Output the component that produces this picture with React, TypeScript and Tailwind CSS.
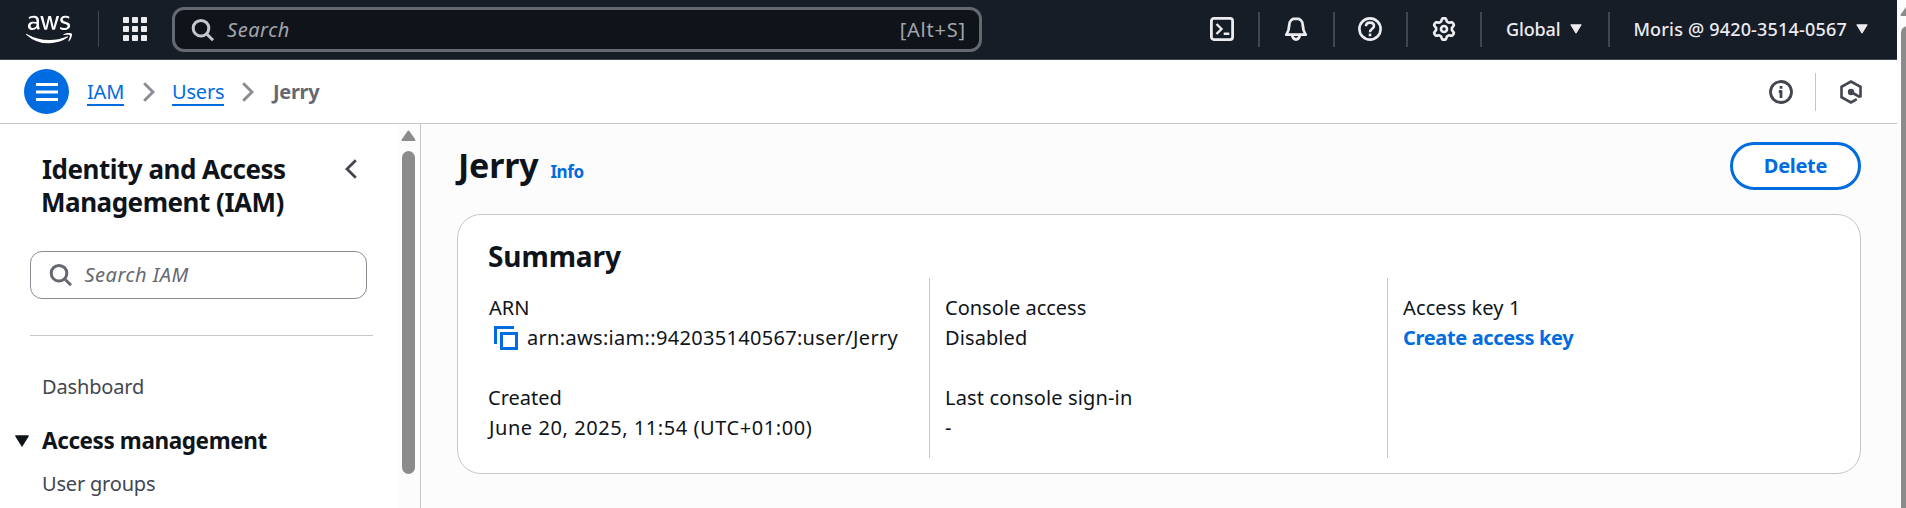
import React from "react";
import { FaAws } from "react-icons/fa";

// Outline of a six-toothed cog centred in a 24x24 box.
const gearPath =
  Array.from({ length: 72 }, (_, i) => {
    const a = (i / 72) * Math.PI * 2;
    const wave = Math.max(-1, Math.min(1, 1.6 * Math.cos(6 * (a + Math.PI / 2))));
    const r = 9.3 + 1.4 * wave;
    return `${i === 0 ? "M" : "L"}${(12 + r * Math.cos(a)).toFixed(2)} ${(12 + r * Math.sin(a)).toFixed(2)}`;
  }).join("") + "z";

function SearchIcon({ className }: { className: string }) {
  return (
    <svg viewBox="0 0 24 24" className={className} fill="none" stroke="currentColor" strokeWidth="3">
      <circle cx="10" cy="10.2" r="7.800" />
      <path d="M15.500 15.700l6.500 6.500" />
    </svg>
  );
}

function Caret({ className }: { className: string }) {
  return (
    <svg viewBox="0 0 12 10" className={className} fill="currentColor" stroke="currentColor" strokeWidth="1" strokeLinejoin="round">
      <path d="M0.8 0.8h10.4L6 9.2z" />
    </svg>
  );
}

function Crumb() {
  return (
    <svg viewBox="0 0 12 20" className="h-5 w-3 text-[#8c8c94]" fill="none" stroke="currentColor" strokeWidth="3">
      <path d="M1.2 1.2L10 10l-8.800 8.800" />
    </svg>
  );
}

function Divider() {
  return <span className="h-[35px] w-[2px] shrink-0 bg-[#424650]" />;
}

function TopBar() {
  return (
    <header className="flex h-[60px] items-start border-b border-[#424650] bg-[#161d26] text-[#ebebf0]">
      <div className="flex h-[58px] w-full items-center">
        <FaAws className="ml-[26px] h-[37px] w-[46px] shrink-0 text-white" />
        <span className="ml-[26px] h-9 w-px shrink-0 bg-[#424650]" />
        <svg viewBox="0 0 24 24" className="ml-6 size-6 shrink-0" fill="currentColor">
          {[0, 9, 18].map((y) =>
            [0, 9, 18].map((x) => <rect key={`${x}-${y}`} x={x} y={y} width="6" height="6" rx="0.8" />)
          )}
        </svg>
        <div className="ml-[25px] mt-px flex h-[45px] w-[810px] shrink-0 items-center rounded-[12px] border-[3px] border-[#656871] bg-[#0f141a] pl-4 pr-[13px]">
          <SearchIcon className="size-6 text-[#c6c6cd]" />
          <span className="ml-[12px] text-[20px] italic leading-[30px] tracking-[0.55px] text-[#a4a4ad]">Search</span>
          <span className="ml-auto text-[20px] leading-[30px] tracking-[0.800px] text-[#a4a4ad]">[Alt+S]</span>
        </div>

        <svg viewBox="0 0 24 24" className="ml-[228px] size-6 shrink-0" fill="none" stroke="currentColor" strokeWidth="2.800">
          <rect x="1.400" y="1.400" width="21.200" height="21.200" rx="2.500" />
          <path d="M6.500 7l5 5-5 5M13.700 16.700h5.600" strokeWidth="2.400" />
        </svg>
        <span className="ml-6 flex"><Divider /></span>
        <svg viewBox="0 0 24 24" className="ml-6 size-6 shrink-0" fill="none" stroke="currentColor" strokeWidth="2.800" strokeLinejoin="round">
          <path d="M12 1.500c-4.200 0-6.800 2.800-6.800 6.800 0 5-1.400 7-2.900 9.400h19.400c-1.500-2.400-2.900-4.400-2.900-9.400 0-4-2.600-6.800-6.800-6.800z" />
          <path d="M8.300 18.500c.5 2.600 1.700 4 3.700 4s3.200-1.400 3.700-4" />
        </svg>
        <span className="ml-[25px] flex"><Divider /></span>
        <svg viewBox="0 0 24 24" className="ml-[23px] size-6 shrink-0" fill="none" stroke="currentColor" strokeWidth="2.600">
          <circle cx="12" cy="12" r="10.600" />
          <path d="M8 9.300C8 6.900 9.700 5.600 12 5.600s4 1.300 4 3.500c0 2.800-4 2.700-4 6.200" />
          <path d="M12 16.600v2.700" />
        </svg>
        <span className="ml-6 flex"><Divider /></span>
        <svg viewBox="0 0 24 24" className="ml-6 size-6 shrink-0" fill="none" stroke="currentColor" strokeWidth="2.700" strokeLinejoin="round">
          <path d={gearPath} />
          <circle cx="12" cy="12" r="3" />
        </svg>
        <span className="ml-6 flex"><Divider /></span>
        <span className="ml-[24px] text-[18px] font-medium leading-[27px] tracking-[-0.15px]">Global</span>
        <Caret className="ml-[10px] h-[10px] w-3 shrink-0" />
        <span className="ml-[26px] flex"><Divider /></span>
        <span className="ml-[23px] whitespace-nowrap text-[18px] font-medium leading-[27px] tracking-[0.19px]">
          Moris @ 9420-3514-0567
        </span>
        <Caret className="ml-[9px] h-[10px] w-3 shrink-0" />
      </div>
    </header>
  );
}

function Breadcrumbs() {
  return (
    <div className="flex h-16 items-center border-b border-[#c6c6cd] bg-white text-[20px] leading-[30px]">
      <button className="ml-6 flex size-[45px] items-center justify-center rounded-full bg-[#006ce0] text-white">
        <svg viewBox="0 0 22 18" className="h-[18px] w-[22px]" fill="currentColor">
          <path d="M0 0h22v3H0zM0 7.500h22v3H0zM0 15h22v3H0z" />
        </svg>
      </button>
      <a className="ml-[18px] flex h-[29px] w-[37px] border-b-2 border-[#006ce0] leading-[30px] tracking-[-0.2px] text-[#006ce0]">IAM</a>
      <span className="ml-[18.500px]"><Crumb /></span>
      <a className="ml-[17.500px] flex h-[29px] w-[52px] border-b-2 border-[#006ce0] leading-[30px] tracking-[-0.18px] text-[#006ce0]">Users</a>
      <span className="ml-[18px]"><Crumb /></span>
      <span className="ml-[19px] pt-px font-bold tracking-[-0.3px] text-[#656871]">Jerry</span>
      <svg viewBox="0 0 24 24" className="ml-auto size-6 text-[#424650]" fill="none" stroke="currentColor" strokeWidth="2.800">
        <circle cx="12" cy="12" r="10.500" />
        <path d="M12 6v2.800M9.800 11.500H12M12 10.300V18" />
      </svg>
      <span className="ml-[22px] h-[38px] w-px bg-[#c6c6cd]" />
      <svg viewBox="0 0 24 24" className="ml-[23px] mr-[34px] size-6 text-[#424650]" fill="none" stroke="currentColor" strokeWidth="2.600">
        <path d="M21.500 17.600V6.800L12 1.600 2.500 6.800v10.400L12 22.400l5.800-3.200" />
        <circle cx="12" cy="12" r="3.200" fill="currentColor" stroke="none" />
        <path d="M12 12l9 5.200" />
      </svg>
    </div>
  );
}

function Sidebar() {
  return (
    <aside className="flex w-[421px] shrink-0 border-r border-[#c6c6cd] bg-white">
      <div className="w-[397px] pl-[30px] text-[#424650]">
        <div className="flex items-start pl-3 pt-[29px]">
          <h2 className="w-[270px] text-[26px] font-bold leading-[33px] text-[#0f141a]">
            <span className="block whitespace-nowrap tracking-[-0.5px]">Identity and Access</span>
            <span className="-ml-px block whitespace-nowrap tracking-[-0.48px]">Management (IAM)</span>
          </h2>
          <svg viewBox="0 0 12 20" className="ml-[33px] mt-[6px] h-5 w-3" fill="none" stroke="currentColor" strokeWidth="2.800">
            <path d="M10.800 1.200L2 10l8.800 8.800" />
          </svg>
        </div>
        <div className="mt-8 flex h-12 w-[337px] items-center rounded-[12px] border border-[#8c8c94] pl-[18px] text-[#656871]">
          <SearchIcon className="size-6" />
          <span className="ml-[11.500px] text-[20px] italic leading-[30px] tracking-[0.49px]">Search IAM</span>
        </div>
        <div className="mt-9 h-px w-[343px] bg-[#c6c6cd]" />
        <div className="mt-9 pl-3 text-[20px] leading-[30px] tracking-[-0.15px]">Dashboard</div>
        <div className="-ml-4 mt-[24px] flex items-center text-[#0f141a]">
          <Caret className="h-3 w-4" />
          <span className="ml-[12px] text-[22.500px] font-bold leading-[30px] tracking-[-0.4px]">Access management</span>
        </div>
        <div className="mt-[13px] pl-3 text-[20px] leading-[30px] tracking-[-0.19px]">User groups</div>
      </div>
      <div className="flex w-[23px] flex-col items-center bg-[#fcfcfc] pt-[6px]">
        <svg viewBox="0 0 15 11" className="h-[11px] w-[15px]" fill="#8b8b8b" stroke="#8b8b8b" strokeWidth="2" strokeLinejoin="round">
          <path d="M1.500 10L7.500 1.500l6 8.500z" />
        </svg>
        <span className="mt-[10px] h-[323px] w-[13px] rounded-full bg-[#8b8b8b]" />
      </div>
    </aside>
  );
}

function UserDetails() {
  return (
    <main className="min-w-0 flex-1 bg-[#fcfcfc] pl-9 pr-9 pt-[18px] text-[#0f141a]">
      <div className="flex h-12 items-start">
        <h1 className="ml-px flex items-baseline text-[34px] font-bold leading-[46px] tracking-[-0.2px]">
          Jerry
          <a className="ml-[12px] text-[17px] tracking-[-0.4px] text-[#006ce0]">Info</a>
        </h1>
        <button className="ml-auto flex h-12 w-[131px] items-center justify-center rounded-full border-[3px] border-[#006ce0] bg-white text-[20px] font-bold leading-[30px] tracking-[-0.3px] text-[#006ce0]">
          Delete
        </button>
      </div>
      <section className="mt-6 h-[260px] rounded-[24px] border border-[#c6c6cd] bg-white pt-[22px]">
        <h2 className="pl-[30px] text-[28px] font-bold leading-[39px] tracking-[-0.09px]">Summary</h2>
        <div className="mt-[2px] flex h-[180px] text-[20px] leading-[30px]">
          <div className="w-[472px] border-r border-[#c6c6cd] pl-[30px] pt-[15px]">
            <div className="pl-px">ARN</div>
            <div className="flex items-center whitespace-nowrap tracking-[0.31px]">
              <svg viewBox="0 0 24 24" className="mb-px ml-[6px] mr-[9px] size-6 text-[#006ce0]" fill="none" stroke="currentColor" strokeWidth="3">
                <path d="M1.500 18V1.500H20" />
                <rect x="7.500" y="7.500" width="15" height="15" />
              </svg>
              arn:aws:iam::942035140567:user/Jerry
            </div>
            <div className="mt-[30px]">Created</div>
            <div className="pl-px tracking-[0.56px]">June 20, 2025, 11:54 (UTC+01:00)</div>
          </div>
          <div className="w-[458px] border-r border-[#c6c6cd] pl-[15px] pt-[15px]">
            <div>Console access</div>
            <div className="tracking-[0.1px]">Disabled</div>
            <div className="mt-[30px] tracking-[0.15px]">Last console sign-in</div>
            <div>-</div>
          </div>
          <div className="pl-[15px] pt-[15px]">
            <div className="tracking-[0.13px]">Access key 1</div>
            <a className="block font-bold tracking-[-0.35px] text-[#006ce0]">Create access key</a>
          </div>
        </div>
      </section>
    </main>
  );
}

export default function App() {
  return (
    <div className="flex h-[508px] w-[1906px] overflow-hidden bg-[#fcfcfc] font-['Noto_Sans',sans-serif]">
      <div className="flex w-[1897px] shrink-0 flex-col">
        <TopBar />
        <Breadcrumbs />
        <div className="flex min-h-0 flex-1">
          <Sidebar />
          <UserDetails />
        </div>
      </div>
      <div className="flex w-[9px] shrink-0 flex-col overflow-hidden pl-[3px] pt-[5px]">
        <svg viewBox="0 0 15 11" className="h-[11px] w-[15px] shrink-0" fill="#8b8b8b" stroke="#8b8b8b" strokeWidth="2" strokeLinejoin="round">
          <path d="M1.500 10L7.500 1.500l6 8.500z" />
        </svg>
        <span className="ml-px mt-[10px] h-[700px] w-[13px] shrink-0 rounded-t-full bg-[#8b8b8b]" />
      </div>
    </div>
  );
}
